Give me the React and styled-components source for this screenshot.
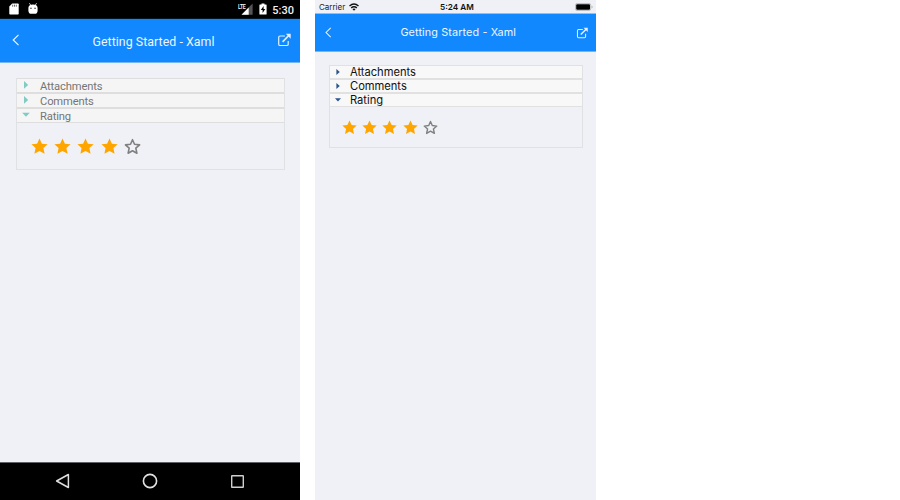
import React from "react";
import styled, { createGlobalStyle, ThemeProvider } from "styled-components";

const GlobalStyle = createGlobalStyle`
  * { box-sizing: border-box; }
  body { margin: 0; background: #fff; overflow: hidden; }
  svg { display: block; flex: none; overflow: visible; }
`;

const android = {
  width: 300,
  headerHeight: 43,
  headerPadding: "0 9px 2px 12px",
  titleFont: '"Roboto", sans-serif',
  titleSize: 12.35,
  titleSpacing: 0.05,
  titleShift: 4,
  titleIndent: 10,
  line: "#75b6fa",
  bodyPadding: "15px 15.5px 0 16px",
  panelHeight: 92,
  rowHeight: 14.75,
  rowBg: "#f5f5f5",
  border: "#e0e1e3",
  rowBorder: "#dedede",
  rowColor: "#757575",
  rowFont: '"Roboto", sans-serif',
  rowSize: 11.2,
  rowSpacing: -0.15,
  rowShift: 1.4,
  arrow: "#80cbc4",
  arrowSlot: 24,
  arrowSize: 10,
  ratingPadding: "15px 0 0 13.5px",
  starSize: 17,
  starGap: 6.4,
};

const ios = {
  width: 281,
  headerHeight: 37,
  headerPadding: "0 7.5px 0 10px",
  titleFont: '"Inter", sans-serif',
  titleSize: 10.8,
  titleSpacing: 0.13,
  titleShift: 1,
  titleIndent: 8,
  line: "#75b6fa",
  bodyPadding: "13px 13.5px 0 14px",
  panelHeight: 83,
  rowHeight: 13.8,
  rowBg: "#f8f8f8",
  border: "#e0e1e3",
  rowBorder: "#e1e1e2",
  rowColor: "#111",
  rowFont: '"Inter", sans-serif',
  rowSize: 11.2,
  rowSpacing: -0.04,
  rowShift: 0.3,
  arrow: "#2f548f",
  arrowSlot: 21,
  arrowSize: 8,
  ratingPadding: "13px 0 0 11.5px",
  starSize: 15,
  starGap: 5.4,
};

const Page = styled.main`
  display: flex;
  gap: 15px;
  width: 900px;
  height: 500px;
`;
const Phone = styled.section`
  display: flex;
  flex-direction: column;
  width: ${(p) => p.theme.width}px;
  height: 500px;
  background: #eff1f6;
`;
const AndroidStatus = styled.div`
  display: flex;
  align-items: center;
  height: 19px;
  padding: 0 6px 0 9px;
  background: #000;
  border-bottom: 1px solid #03172b;
  color: #fff;
`;
const StatusIcons = styled.div`
  display: flex;
  align-items: center;
  gap: 9px;
  flex: 1;
`;
const Clock = styled.span`
  margin-left: 5px;
  padding-top: 3px;
  font: 500 11px/14px "Roboto", sans-serif;
  color: #f2f2f2;
`;
const IosStatus = styled.div`
  display: grid;
  grid-template-columns: 1fr auto 1fr;
  align-items: center;
  height: 14px;
  padding: 0 3px 0 4px;
  background: #eff1f6;
  border-bottom: 1px solid #8cc0f7;
`;
const Carrier = styled.div`
  display: flex;
  align-items: center;
  gap: 4px;
  font: 400 8px/12px "Inter", sans-serif;
  color: #222;
`;
const IosTime = styled.span`
  margin-left: 2px;
  padding-top: 1px;
  font: 600 8.2px/12px "Inter", sans-serif;
  color: #111;
`;
const BatterySlot = styled.div`
  justify-self: end;
`;
const Header = styled.header`
  display: flex;
  align-items: center;
  justify-content: space-between;
  height: ${(p) => p.theme.headerHeight}px;
  padding: ${(p) => p.theme.headerPadding};
  background: #1288ff;
`;
const HeaderLine = styled.div`
  height: 1px;
  background: ${(p) => p.theme.line};
`;
const Title = styled.h1`
  margin: 0;
  padding-top: ${(p) => p.theme.titleShift}px;
  padding-left: ${(p) => p.theme.titleIndent}px;
  font: 400 ${(p) => p.theme.titleSize}px/16px ${(p) => p.theme.titleFont};
  letter-spacing: ${(p) => p.theme.titleSpacing}px;
  white-space: nowrap;
  color: #edf5ff;
`;
const Body = styled.div`
  flex: 1;
  padding: ${(p) => p.theme.bodyPadding};
`;
const Panel = styled.div`
  height: ${(p) => p.theme.panelHeight}px;
  border: 1px solid ${(p) => p.theme.border};
  border-top-color: ${(p) => p.theme.rowBorder};
`;
const Row = styled.div`
  display: flex;
  align-items: center;
  height: ${(p) => p.theme.rowHeight}px;
  padding-left: 3.5px;
  background: ${(p) => p.theme.rowBg};
  border-bottom: ${(p) => (p.$last ? 1 : 2)}px solid ${(p) => p.theme.rowBorder};
`;
const ArrowSlot = styled.span`
  width: ${(p) => p.theme.arrowSlot - 4.5}px;
`;
const RowLabel = styled.span`
  padding-top: ${(p) => p.theme.rowShift * 2}px;
  font: 400 ${(p) => p.theme.rowSize}px/12px ${(p) => p.theme.rowFont};
  letter-spacing: ${(p) => p.theme.rowSpacing}px;
  color: ${(p) => p.theme.rowColor};
`;
const Stars = styled.div`
  display: flex;
  gap: ${(p) => p.theme.starGap}px;
  padding: ${(p) => p.theme.ratingPadding};
`;
const NavBar = styled.nav`
  display: flex;
  align-items: center;
  justify-content: space-between;
  height: 38px;
  padding: 0 55px 1px;
  background: #000;
  border-top: 1px solid #606166;
`;

const Arrow = ({ open, size, color }) => (
  <svg width={size} height={size} viewBox="0 0 10 10" fill={color}>
    <path d={open ? "M1.2 2.8h7.6L5 6.8z" : "M3 1.1v7.6L7.2 4.9z"} />
  </svg>
);

const STAR = "M8.5 .5l2.4 5.2 5.7.6-4.2 3.8 1.2 5.7-5.1-2.9-5.1 2.9 1.2-5.7L.4 6.3l5.7-.6z";
const Star = ({ size, filled }) => (
  <svg width={size} height={size} viewBox="0 0 17 17">
    {filled ? (
      <path d={STAR} fill="#ffa500" />
    ) : (
      <path d="M8.5 1.7l2 4.6 5.1.6-3.8 3.3 1.1 5-4.4-2.5-4.4 2.5 1.1-5-3.8-3.3 5.1-.6z" fill="none" stroke="#808080" strokeWidth="1.6" strokeLinejoin="round" />
    )}
  </svg>
);

const Back = ({ size }) => (
  <svg width={size} height={size + 4} viewBox="0 0 8 12" fill="none" stroke="#eef6ff" strokeWidth="1.15">
    <path d="M6.5 .8L1.2 6l5.3 5.2" />
  </svg>
);

const OpenExternal = ({ size }) => (
  <svg width={size} height={size} viewBox="0 0 14 14" fill="none" stroke="#e3f0ff" strokeWidth="1.2">
    <path d="M8 3H3Q1.7 3 1.7 4.3v6.9q0 1.3 1.3 1.3h6.9q1.3 0 1.3-1.3V8" />
    <path d="M5.6 8.8l6.2-6.3" strokeWidth="1.7" />
    <path d="M8.8 .8h4.9v4.9z" fill="#e3f0ff" stroke="none" />
  </svg>
);

const rows = [
  { label: "Attachments" },
  { label: "Comments" },
  { label: "Rating", open: true },
];

const Screen = ({ t }) => (
  <>
    <Header>
      <Back size={t.width === 300 ? 8 : 7} />
      <Title>Getting Started - Xaml</Title>
      <OpenExternal size={t.width === 300 ? 14 : 12} />
    </Header>
    <HeaderLine />
    <Body>
      <Panel>
        {rows.map((r) => (
          <Row key={r.label} $last={r.open}>
            <ArrowSlot>
              <Arrow open={r.open} size={t.arrowSize} color={t.arrow} />
            </ArrowSlot>
            <RowLabel>{r.label}</RowLabel>
          </Row>
        ))}
        <Stars>
          {[1, 2, 3, 4, 5].map((n) => (
            <Star key={n} size={t.starSize} filled={n <= 4} />
          ))}
        </Stars>
      </Panel>
    </Body>
  </>
);

const SdCard = () => (
  <svg width="10" height="12" viewBox="0 0 10 12">
    <path d="M3.2 .5H9q.7 0 .7.7v9.6q0 .7-.7.7H1q-.7 0-.7-.7V3.5z" fill="#fff" />
    <path d="M3.7 1.7v2M5.5 1.7v2M7.3 1.7v2" stroke="#444" strokeWidth=".8" />
  </svg>
);
const Droid = () => (
  <svg width="10" height="12" viewBox="0 0 10 12">
    <path d="M1.4.2l1.3 1.9M8.6.2L7.3 2.1" stroke="#ddd" strokeWidth=".9" />
    <path d="M.4 4.8Q.8 1.5 5 1.5t4.6 3.3v3.1Q9.2 10.8 6.7 10.8H3.3Q.8 10.8.4 7.9z" fill="#fff" />
    <path d="M2.2 5.3h1.5M6.3 5.3h1.5" stroke="#222" strokeWidth="1.1" />
  </svg>
);
const LteLabel = styled.span`
  align-self: flex-start;
  margin: 3px -7.5px 0 0;
  font: 500 7px/8px "Roboto", sans-serif;
  letter-spacing: -0.4px;
  transform: scaleX(0.75);
  transform-origin: left;
  z-index: 1;
`;
const Signal = () => (
  <svg width="12" height="12" viewBox="0 0 12 12">
    <path d="M.5 11.8L11.6.6v11.2z" fill="#555" />
    <path d="M.5 11.8L7.7 4.6v7.2z" fill="#fff" />
  </svg>
);
const ChargeSlot = styled.span`
  margin-left: 6.5px;
`;
const Charging = () => (
  <svg width="8" height="12" viewBox="0 0 8 12">
    <path d="M2.5.4h3v1.1h1.6q.5 0 .5.5v9q0 .6-.6.6H1q-.6 0-.6-.6V2q0-.5.5-.5h1.6z" fill="#fff" />
    <path d="M4.6 3L1.8 7h1.8v3L6.3 6H4.6z" fill="#000" />
  </svg>
);
const Wifi = () => (
  <svg width="10" height="8" viewBox="0 0 10 8" fill="none" stroke="#111" strokeWidth="1.4">
    <path d="M.5 3Q5-1 9.5 3M2.2 4.9q2.8-2.4 5.6 0" />
    <path d="M3.4 6.1Q5 4.8 6.6 6.1L5 7.7z" fill="#111" stroke="none" />
  </svg>
);
const Battery = () => (
  <svg width="18" height="8" viewBox="0 0 18 8">
    <rect x=".5" y=".5" width="15.2" height="7" rx="1.6" fill="none" stroke="#aaa" strokeWidth=".7" />
    <rect x="1.2" y="1.2" width="13.8" height="5.6" rx="1" fill="#000" />
    <path d="M16.6 2.8q1 .3 1 1.2t-1 1.2z" fill="#aaa" />
  </svg>
);

export default function App() {
  return (
    <>
      <GlobalStyle />
      <Page>
        <ThemeProvider theme={android}>
          <Phone>
            <AndroidStatus>
              <StatusIcons>
                <SdCard />
                <Droid />
              </StatusIcons>
              <LteLabel>LTE</LteLabel>
              <Signal />
              <ChargeSlot><Charging /></ChargeSlot>
              <Clock>5:30</Clock>
            </AndroidStatus>
            <Screen t={android} />
            <NavBar>
              <svg width="15" height="16" viewBox="0 0 15 16" fill="none" stroke="#dedede" strokeWidth="1.5" strokeLinejoin="round">
                <path d="M13.4 1.5v13L1.6 8z" />
              </svg>
              <svg width="16" height="16" viewBox="0 0 16 16" fill="none" stroke="#e2e2e2" strokeWidth="1.6">
                <circle cx="8" cy="8" r="6.6" />
              </svg>
              <svg width="15" height="15" viewBox="0 0 15 15" fill="none" stroke="#cfcfcf" strokeWidth="1.4">
                <rect x="1.7" y="1.7" width="11.6" height="11.6" rx=".4" />
              </svg>
            </NavBar>
          </Phone>
        </ThemeProvider>
        <ThemeProvider theme={ios}>
          <Phone>
            <IosStatus>
              <Carrier>
                Carrier
                <Wifi />
              </Carrier>
              <IosTime>5:24 AM</IosTime>
              <BatterySlot><Battery /></BatterySlot>
            </IosStatus>
            <Screen t={ios} />
          </Phone>
        </ThemeProvider>
      </Page>
    </>
  );
}
